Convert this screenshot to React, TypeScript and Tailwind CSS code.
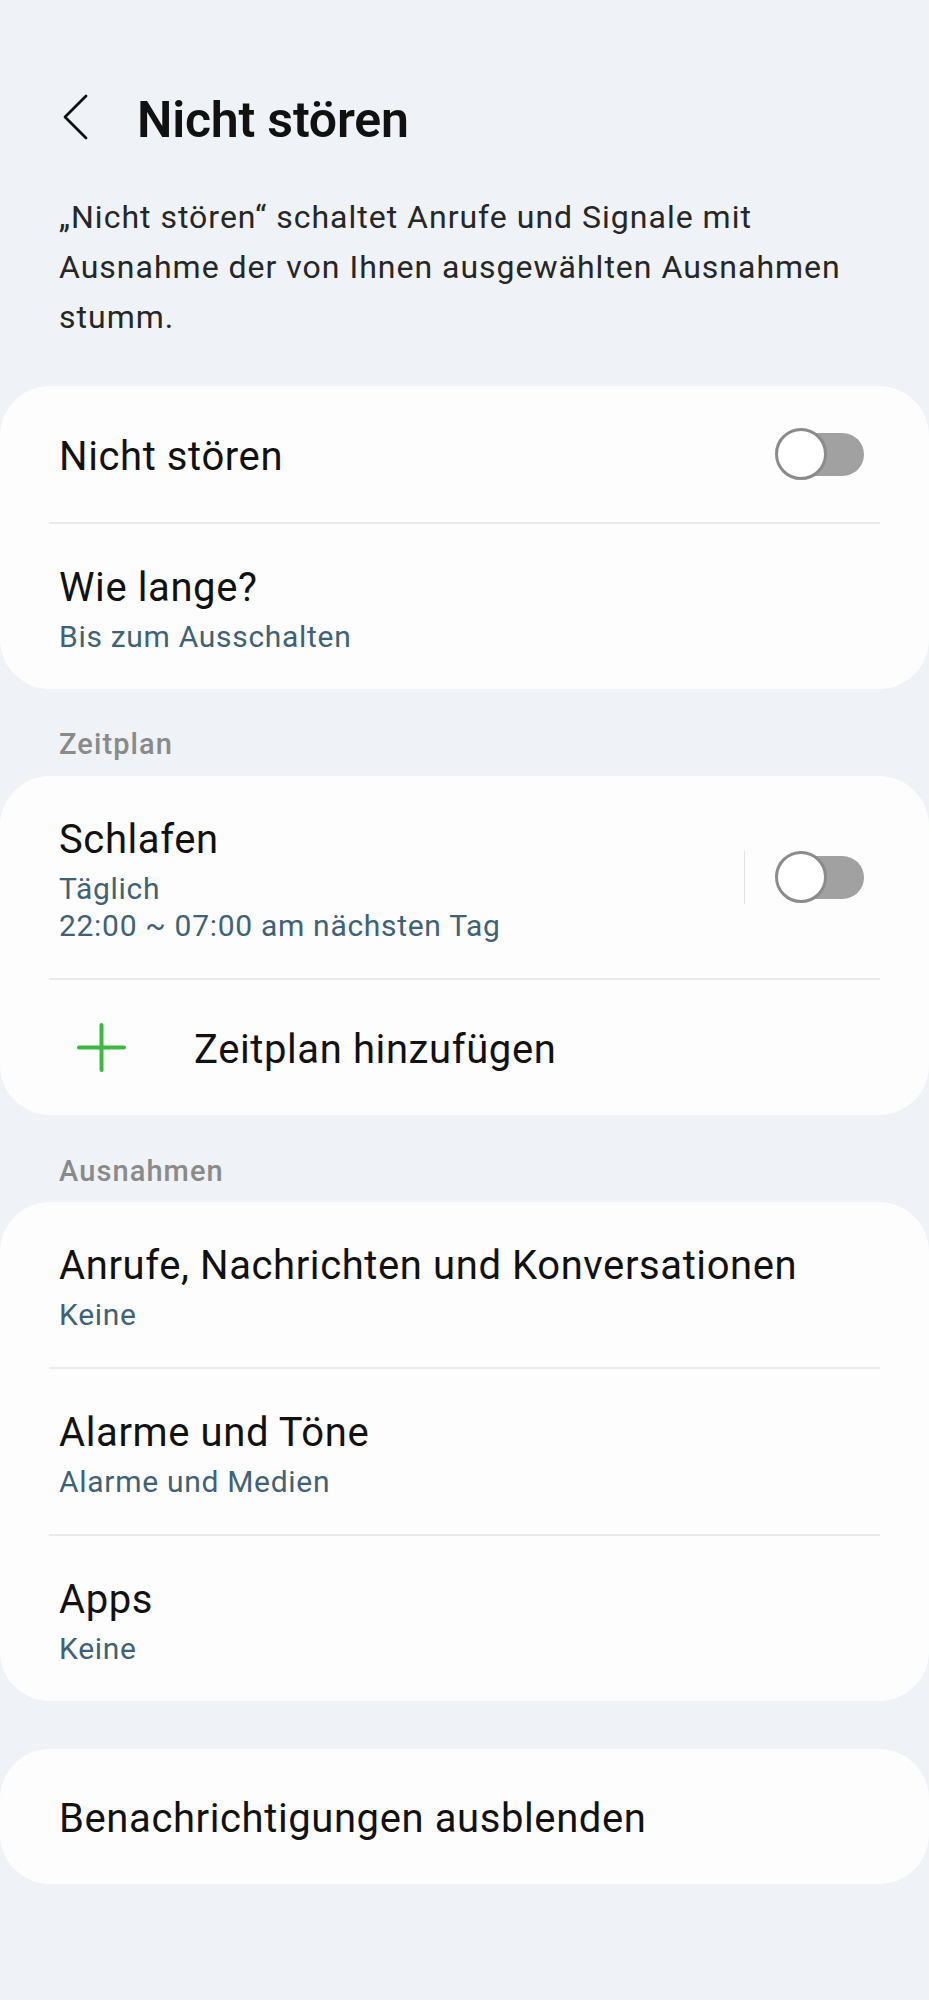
import React from "react";

function Toggle() {
  return (
    <div className="relative w-[89px] h-[54px] shrink-0">
      <div className="absolute right-0 top-[6px] w-[70px] h-[43px] rounded-full bg-[#a1a1a1]" />
      <div className="absolute left-0 top-[1px] w-[52px] h-[52px] rounded-full bg-white border-[3px] border-[#8b8b8b]" />
    </div>
  );
}

function Divider() {
  return <div className="mx-[49px] h-[2px] bg-[#ebebeb]" />;
}

function TwoLine({ title, sub }: { title: string; sub: string[] }) {
  return (
    <div className="pl-[59px] pr-[65px] pt-[42px] pb-[34px]">
      <div className="text-[40px] leading-[44px] tracking-[0.6px] text-[#111]">{title}</div>
      <div className="mt-[8px]">
        {sub.map((s) => (
          <div key={s} className="text-[30px] leading-[37px] tracking-[0.7px] text-[#3f6276]">
            {s}
          </div>
        ))}
      </div>
    </div>
  );
}

export default function App() {
  return (
    <div className="min-h-[2000px] w-full bg-[#eff2f6] font-['Roboto',sans-serif] antialiased">
      <div className="flex items-center pt-[90px] pl-[62px]">
        <svg width="26" height="46" viewBox="0 0 26 46" className="shrink-0 -mt-[6px]">
          <path d="M24 2 L3 23 L24 44" fill="none" stroke="#111" strokeWidth="2.8" strokeLinecap="round" strokeLinejoin="round" />
        </svg>
        <div className="ml-[49px] text-[50px] leading-[60px] font-semibold text-[#111] tracking-[-0.2px]">
          Nicht stören
        </div>
      </div>

      <div className="px-[59px] mt-[42px] text-[32px] leading-[50px] tracking-[1px] text-[#262626]">
        „Nicht stören“ schaltet Anrufe und Signale mit Ausnahme der von Ihnen ausgewählten Ausnahmen stumm.
      </div>

      <div className="mt-[44px] bg-[#fdfdfd] rounded-[50px]">
        <div className="flex items-center justify-between pl-[59px] pr-[65px] h-[136px]">
          <div className="text-[40px] leading-[44px] tracking-[0.6px] text-[#111] pt-[5px]">Nicht stören</div>
          <Toggle />
        </div>
        <Divider />
        <TwoLine title="Wie lange?" sub={["Bis zum Ausschalten"]} />
      </div>

      <div className="px-[59px] pt-[37px] pb-[14px] text-[29px] leading-[36px] tracking-[1.1px] font-medium text-[#8a8a8a]">
        Zeitplan
      </div>

      <div className="bg-[#fdfdfd] rounded-[50px]">
        <div className="flex items-center">
          <div className="flex-1">
            <TwoLine title="Schlafen" sub={["Täglich", "22:00 ~ 07:00 am nächsten Tag"]} />
          </div>
          <div className="w-[1px] h-[53px] bg-[#e2e2e2] mr-[30px]" />
          <div className="pr-[65px]">
            <Toggle />
          </div>
        </div>
        <Divider />
        <div className="flex items-center h-[135px] pl-[77px]">
          <svg width="49" height="49" viewBox="0 0 49 49" className="shrink-0">
            <path d="M24.5 2 V47 M2 24.5 H47" stroke="#3fb83f" strokeWidth="4" strokeLinecap="round" />
          </svg>
          <div className="ml-[68px] text-[40px] leading-[44px] tracking-[0.6px] text-[#111] pt-[5px]">Zeitplan hinzufügen</div>
        </div>
      </div>

      <div className="px-[59px] pt-[38px] pb-[13px] text-[29px] leading-[36px] tracking-[1.1px] font-medium text-[#8a8a8a]">
        Ausnahmen
      </div>

      <div className="bg-[#fdfdfd] rounded-[50px]">
        <TwoLine title="Anrufe, Nachrichten und Konversationen" sub={["Keine"]} />
        <Divider />
        <TwoLine title="Alarme und Töne" sub={["Alarme und Medien"]} />
        <Divider />
        <TwoLine title="Apps" sub={["Keine"]} />
      </div>

      <div className="mt-[48px] bg-[#fdfdfd] rounded-[50px]">
        <div className="flex items-center pl-[59px] h-[135px]">
          <div className="text-[40px] leading-[44px] tracking-[0.6px] text-[#111] pt-[5px]">Benachrichtigungen ausblenden</div>
        </div>
      </div>
    </div>
  );
}
